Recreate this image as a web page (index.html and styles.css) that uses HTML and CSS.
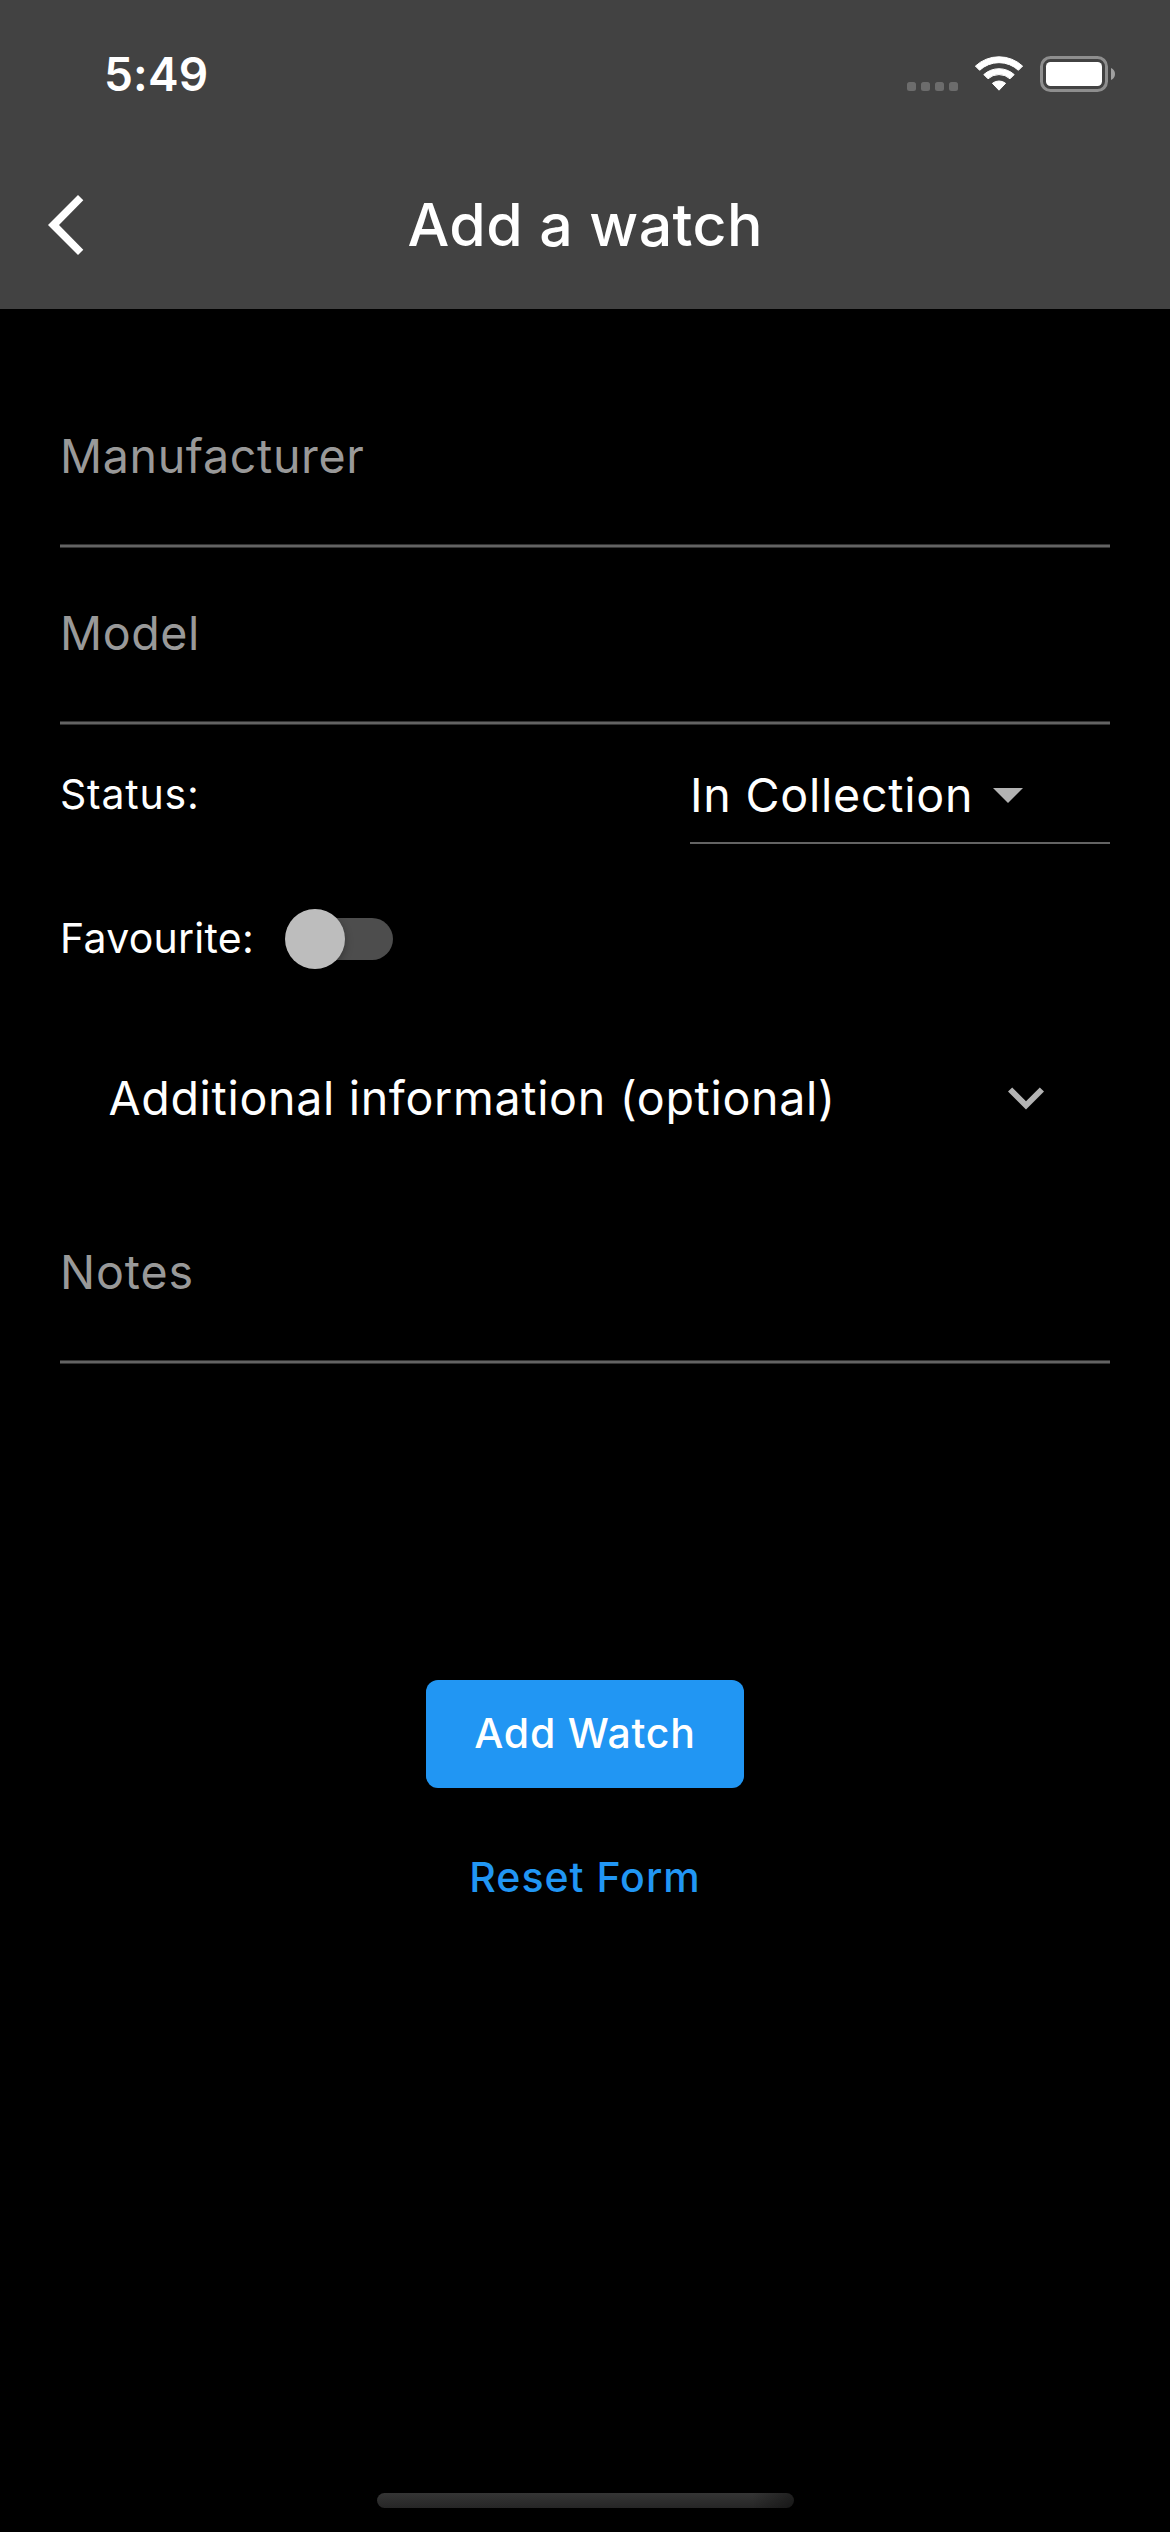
FILE: index.html
```
<!DOCTYPE html>
<html lang="en">
<head>
<meta charset="utf-8">
<title>Add a watch</title>
<link rel="stylesheet" href="styles.css">
</head>
<body>
<div class="screen">
  <header class="header">
    <div class="status-bar">
      <span class="time">5:49</span>
      <svg class="status-icons" width="210" height="40" viewBox="0 0 210 40">
        <g fill="#6c6c6c">
          <rect x="2" y="28" width="9" height="9" rx="2.5"/>
          <rect x="16" y="28" width="9" height="9" rx="2.5"/>
          <rect x="30" y="28" width="9" height="9" rx="2.5"/>
          <rect x="44" y="28" width="9" height="9" rx="2.5"/>
        </g>
        <g fill="#fff" stroke="#fff" stroke-width="1" stroke-linejoin="round">
          <path d="M70.4 12.1 A34.6 34.6 0 0 1 117.6 12.1 L113.4 16.3 A28.4 28.4 0 0 0 74.6 16.3 Z"/>
          <path d="M78.8 20.6 A22.6 22.6 0 0 1 109.2 20.6 L105 24.8 A16.4 16.4 0 0 0 83 24.8 Z"/>
          <path d="M87.4 29.3 A10.6 10.6 0 0 1 100.6 29.3 L94 36.2 Z"/>
        </g>
        <rect x="136.500" y="3.500" width="65" height="33" rx="9" fill="none" stroke="#8e8e8e" stroke-width="3"/>
        <rect x="141" y="8" width="56" height="24" rx="4.500" fill="#fff"/>
        <path d="M206 14 C208.700 15.200 210 17.300 210 20 C210 22.700 208.700 24.800 206 26 Z" fill="#a0a0a0"/>
      </svg>
    </div>
    <div class="title-bar">
      <svg class="back" width="36" height="60" viewBox="0 0 36 60"><path d="M30 0 L35.300 5.300 L11 30 L35.300 54.700 L30 60 L0 30 Z" fill="#fff"/></svg>
      <h1 class="title">Add a watch</h1>
    </div>
  </header>

  <main class="form">
    <div class="field">Manufacturer</div>
    <div class="field field-model">Model</div>
    <div class="status-row">
      <span class="label status-label">Status:</span>
      <div class="dropdown">
        <span class="dropdown-value">In Collection</span>
        <svg width="30" height="15" viewBox="0 0 30 15"><path d="M0 0H30L15 15Z" fill="#b3b3b3"/></svg>
      </div>
    </div>
    <div class="favourite-row">
      <span class="label favourite-label">Favourite:</span>
      <div class="switch"><div class="track"><div class="thumb"></div></div></div>
    </div>
    <div class="expander">
      <span class="expander-title">Additional information (optional)</span>
      <svg width="36" height="23" viewBox="0 0 36 23"><path d="M4.200 .4 L18 14.200 L31.800 .4 L36 4.600 L18 22.600 L0 4.600 Z" fill="#b3b3b3"/></svg>
    </div>
    <div class="field field-notes">Notes</div>
    <div class="actions">
      <button class="submit">Add Watch</button>
      <button class="reset">Reset Form</button>
    </div>
  </main>
  <div class="home-indicator"></div>
</div>
</body>
</html>
```
FILE: styles.css
```
* {
  box-sizing: border-box;
}

body {
  margin: 0;
  background: #000;
  color: #fff;
  font-family: Inter, "Liberation Sans", sans-serif;
}

svg {
  display: block;
  flex: none;
}

.screen {
  display: flex;
  flex-direction: column;
  width: 1170px;
  height: 2532px;
  padding-bottom: 24px;
  background: #000;
  white-space: nowrap;
}

.header {
  height: 309px;
  background: #424242;
}

.status-bar {
  display: flex;
  justify-content: space-between;
  height: 141px;
  padding: 46px 55px 0 104px;
}

.time {
  font-size: 46px;
  font-weight: 600;
  line-height: 56px;
  letter-spacing: 0.16px;
}

.status-icons {
  margin-top: 8px;
}

.title-bar {
  display: grid;
  grid-template-columns: 359.5px 1fr;
  align-items: center;
  height: 168px;
  padding-left: 48px;
}

.title {
  margin: 0;
  padding-bottom: 2px;
  font-size: 59px;
  font-weight: 500;
  line-height: 71px;
  letter-spacing: 0.43px;
}

.form {
  padding: 62px 60px 0;
}

.field {
  height: 177px;
  padding-top: 57px;
  background: linear-gradient(#333 1px, #636363 1px 3px, #333 3px) bottom / 100% 4px no-repeat;
  color: #999;
  font-size: 46.6px;
  line-height: 56px;
  letter-spacing: 0.63px;
}

.field-model {
  letter-spacing: 0.57px;
}

.field-notes {
  letter-spacing: 0.88px;
}

.label {
  font-size: 41px;
  line-height: 50px;
}

.status-row {
  display: flex;
  justify-content: space-between;
  height: 119px;
}

.status-label {
  padding-top: 44px;
  letter-spacing: 0.79px;
}

.dropdown {
  display: flex;
  align-items: center;
  gap: 19.7px;
  width: 420px;
  padding-top: 23px;
  border-bottom: 2px solid #636363;
}

.dropdown-value {
  font-size: 46.6px;
  line-height: 56px;
  letter-spacing: 0.755px;
}

.favourite-row {
  display: flex;
  align-items: center;
  height: 188px;
}

.favourite-label {
  width: 225px;
  letter-spacing: 0.265px;
}

.switch {
  width: 108px;
  padding: 2px 0 0 9px;
}

.track {
  display: flex;
  align-items: center;
  height: 42px;
  border-radius: 21px;
  background: #4d4d4d;
}

.thumb {
  flex: none;
  width: 60px;
  height: 60px;
  margin-left: -9px;
  border-radius: 50%;
  background: #bdbdbd;
  box-shadow: 0 3px 9px rgba(0, 0, 0, 0.3);
}

.expander {
  display: flex;
  align-items: center;
  justify-content: space-between;
  height: 132px;
  margin-bottom: 23px;
  padding: 0 66px 0 48.4px;
}

.expander-title {
  font-size: 46.6px;
  line-height: 56px;
  letter-spacing: 0.663px;
}

.actions {
  display: flex;
  flex-direction: column;
  align-items: center;
  gap: 61px;
  padding-top: 316px;
}

.submit,
.reset {
  border: 0;
  font-family: inherit;
  font-size: 41px;
  font-weight: 500;
}

.submit {
  width: 318px;
  height: 108px;
  padding: 0 0 2px;
  border-radius: 12px;
  background: #2196f3;
  color: #fff;
  line-height: 50px;
  letter-spacing: 0.774px;
}

.reset {
  padding: 0;
  background: none;
  color: #2196f3;
  line-height: 56px;
  letter-spacing: 1px;
}

.home-indicator {
  width: 417px;
  height: 15px;
  margin: auto auto 0;
  border-radius: 7.5px;
  background: linear-gradient(90deg, transparent 90%, rgba(0, 0, 0, 0.4)), linear-gradient(#353535, #262626);
}
```
